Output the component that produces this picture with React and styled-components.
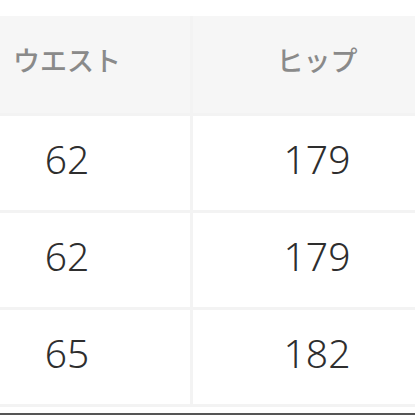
import React from 'react';
import styled, { createGlobalStyle } from 'styled-components';

const rows = [
  { waist: '62', hip: '179' },
  { waist: '62', hip: '179' },
  { waist: '65', hip: '182' },
];

const GlobalStyle = createGlobalStyle`
  html, body {
    margin: 0;
    padding: 0;
    background: #ffffff;
    overflow: hidden;
  }
`;

const Page = styled.div`
  width: 415px;
  height: 415px;
  overflow: hidden;
  display: flex;
  flex-direction: column;
  padding-top: 16px;
  box-sizing: border-box;
`;

const SizeTable = styled.div`
  display: grid;
  grid-template-columns: 246px 248px;
  grid-auto-rows: 94px;
  grid-template-rows: 97px;
  gap: 3px;
  margin-left: -56px;
  width: 497px;
  background: #f3f3f3;
  padding-bottom: 3px;
  flex-shrink: 0;
`;

const HeadCell = styled.div`
  background: #f6f6f6;
  display: flex;
  align-items: center;
  justify-content: center;
  padding-bottom: 10px;
  box-sizing: border-box;
  font-family: "Noto Sans CJK JP", "Noto Sans", sans-serif;
  font-size: 27px;
  font-weight: 500;
  color: #8a8a8a;
`;

const Cell = styled.div`
  background: #ffffff;
  display: flex;
  align-items: center;
  justify-content: center;
  padding-bottom: 10px;
  box-sizing: border-box;
  font-family: "Noto Sans", "Liberation Sans", sans-serif;
  font-size: 39px;
  font-weight: 300;
  color: #2e2e2e;
`;

const BottomRule = styled.div`
  margin-top: 6px;
  height: 2px;
  flex-shrink: 0;
  background: #555555;
`;

export default function App() {
  return (
    <>
      <GlobalStyle />
      <Page>
        <SizeTable>
          <HeadCell>ウエスト</HeadCell>
          <HeadCell>ヒップ</HeadCell>
          {rows.map((r, i) => (
            <React.Fragment key={i}>
              <Cell>{r.waist}</Cell>
              <Cell>{r.hip}</Cell>
            </React.Fragment>
          ))}
        </SizeTable>
        <BottomRule />
      </Page>
    </>
  );
}
